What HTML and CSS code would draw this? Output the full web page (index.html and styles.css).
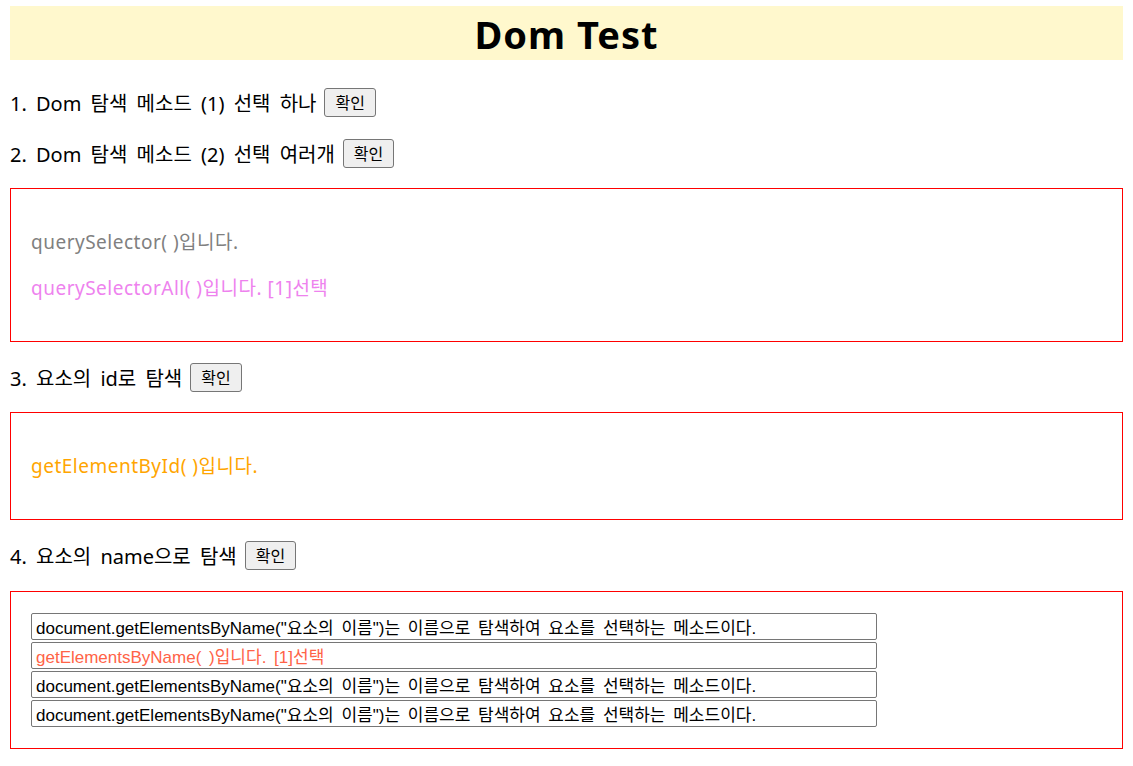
FILE: index.html
```html
<!DOCTYPE html>
<html lang="ko">
<head>
<meta charset="utf-8">
<title>Dom Test</title>
<link rel="stylesheet" href="styles.css">
</head>
<body>
<div class="page">
  <h1 class="title">Dom Test</h1>

  <div class="row row-first"><span class="label">1. Dom 탐색 메소드 (1) 선택 하나</span><button class="btn">확인</button></div>
  <div class="row"><span class="label">2. Dom 탐색 메소드 (2) 선택 여러개</span><button class="btn">확인</button></div>

  <div class="box">
    <p class="msg gray">querySelector( )입니다.</p>
    <p class="msg violet">querySelectorAll( )입니다. [1]선택</p>
  </div>

  <div class="row"><span class="label">3. 요소의 id로 탐색</span><button class="btn">확인</button></div>

  <div class="box">
    <p class="msg orange">getElementById( )입니다.</p>
  </div>

  <div class="row row-last"><span class="label">4. 요소의 name으로 탐색</span><button class="btn">확인</button></div>

  <div class="box box-name">
    <div class="inputs">
      <input class="field" type="text" name="item" value="document.getElementsByName(&quot;요소의 이름&quot;)는 이름으로 탐색하여 요소를 선택하는 메소드이다.">
      <input class="field tomato" type="text" name="item" value="getElementsByName( )입니다. [1]선택">
      <input class="field" type="text" name="item" value="document.getElementsByName(&quot;요소의 이름&quot;)는 이름으로 탐색하여 요소를 선택하는 메소드이다.">
      <input class="field" type="text" name="item" value="document.getElementsByName(&quot;요소의 이름&quot;)는 이름으로 탐색하여 요소를 선택하는 메소드이다.">
    </div>
  </div>
</div>
</body>
</html>
```

FILE: styles.css
```css
html, body {
  margin: 0;
  padding: 0;
  background: #ffffff;
}

body {
  font-family: "Noto Sans", "Noto Sans CJK KR", sans-serif;
  color: #000;
}

.page {
  padding: 6px 10px 0 10px;
}

.title {
  margin: 0;
  height: 54px;
  line-height: 56px;
  background: #fff8cd;
  text-align: center;
  font-size: 38px;
  font-weight: 700;
  letter-spacing: 1px;
}

.row {
  display: flex;
  align-items: center;
  gap: 8px;
  height: 32px;
  margin: 19px 0;
}

.label {
  font-size: 20px;
  word-spacing: 4px;
  white-space: pre;
}

.row-first {
  margin-top: 26px;
}

.row-last {
  margin-bottom: 20px;
}

.btn {
  height: 29px;
  padding: 0 10px;
  font-family: "Noto Sans CJK KR", sans-serif;
  font-size: 16px;
  color: #000;
  background: #efefef;
  border: 1px solid #767676;
  border-radius: 3px;
}

.box {
  border: 1px solid #ff0000;
  padding: 20px;
}

.box-name {
  padding: 21px 20px;
}

.msg {
  margin: 20px 0;
  font-size: 19px;
  letter-spacing: 0.5px;
  line-height: 26px;
}

.gray { color: #808080; }
.violet { color: #ee82ee; }
.orange { color: #ffa500; }

.inputs {
  display: flex;
  flex-direction: column;
  gap: 2px;
}

.field {
  box-sizing: border-box;
  width: 846px;
  height: 27px;
  margin: 0;
  padding: 0 4px;
  font-family: "Liberation Sans", "Noto Sans CJK KR", sans-serif;
  font-size: 17px;
  word-spacing: 3px;
  color: #000;
  border: 1px solid #767676;
  border-radius: 2px;
  background: #fff;
}

.field.tomato { color: #ff6347; }
```
